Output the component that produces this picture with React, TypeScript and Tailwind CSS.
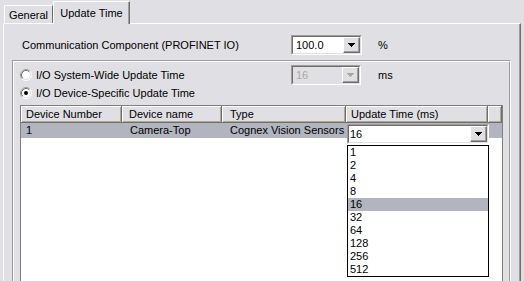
import type { ReactNode } from 'react'

const Arrow = ({ color = '#000000' }: { color?: string }) => (
  <svg width="7" height="4" viewBox="0 0 7 4" shapeRendering="crispEdges">
    <rect x="0" y="0" width="7" height="1" fill={color} />
    <rect x="1" y="1" width="5" height="1" fill={color} />
    <rect x="2" y="2" width="3" height="1" fill={color} />
    <rect x="3" y="3" width="1" height="1" fill={color} />
  </svg>
)

const Combo = ({
  value,
  width,
  pad,
  disabled = false,
}: {
  value: string
  width: string
  pad: string
  disabled?: boolean
}) => (
  <div
    className={`h-[20px] border border-t-[#9d9da1] border-l-[#9d9da1] border-r-white border-b-white ${width}`}
  >
    <div
      className={`flex h-full border border-t-[#716f64] border-l-[#716f64] border-r-[#e0dfe3] border-b-[#e0dfe3] ${
        disabled ? 'bg-[#e0dfe3] text-[#aca899]' : 'bg-white'
      }`}
    >
      <span className={`flex flex-1 items-center ${pad}`}>{value}</span>
      <div className="flex h-[16px] w-[17px] items-center justify-center border border-t-white border-l-white border-r-[#716f64] border-b-[#716f64] bg-[#e0dfe3] shadow-[inset_-1px_-1px_0_#9d9da1]">
        <Arrow color={disabled ? '#aca899' : '#000000'} />
      </div>
    </div>
  </div>
)

const Radio = ({ checked = false }: { checked?: boolean }) => (
  <svg width="12" height="12" viewBox="0 0 12 12">
    <circle cx="6" cy="6" r="5" fill="white" />
    <path d="M2.11 9.89A5.5 5.5 0 0 1 9.89 2.11" fill="none" stroke="#9d9da1" />
    <path d="M9.89 2.11A5.5 5.5 0 0 1 2.11 9.89" fill="none" stroke="#ffffff" />
    <path d="M2.82 9.18A4.5 4.5 0 0 1 9.18 2.82" fill="none" stroke="#716f64" />
    <path d="M9.18 2.82A4.5 4.5 0 0 1 2.82 9.18" fill="none" stroke="#e0dfe3" />
    {checked && <circle cx="6" cy="6" r="2" fill="black" />}
  </svg>
)

const HeaderCell = ({ width, pad, children }: { width: string; pad: string; children?: ReactNode }) => (
  <div
    className={`flex h-full items-center border-r border-b border-r-[#716f64] border-b-[#716f64] bg-[#e0dfe3] shadow-[inset_1px_1px_0_#ffffff,inset_-1px_-1px_0_#aca899] ${width} ${pad}`}
  >
    {children}
  </div>
)

const times = ['1', '2', '4', '8', '16', '32', '64', '128', '256', '512']

export default function App() {
  return (
    <div className="h-[281px] w-[524px] overflow-hidden bg-[#e0dfe3] font-['Liberation_Sans',Arial,sans-serif] text-[11px] leading-none text-black">
      {/* tabs */}
      <div className="relative z-10 flex h-[23px] items-end pl-[4px]">
        <div className="flex h-[18px] w-[49px] items-center justify-center rounded-tl-[2px] border-t border-l border-r border-t-white border-l-white border-r-[#716f64] pt-[2px]">
          General
        </div>
        <div className="-mb-px flex h-[23px] w-[77px] items-center justify-center rounded-tl-[2px] border-t border-l border-r border-t-white border-l-white border-r-[#716f64] bg-[#e0dfe3] shadow-[inset_-1px_0_0_#9d9da1]">
          Update Time
        </div>
      </div>

      {/* panel */}
      <div className="ml-[3px] h-[258px] w-[518px] border-t border-l border-r border-t-white border-l-white border-r-[#716f64] shadow-[inset_-1px_0_0_#9d9da1]">
        <div className="mt-[11px] flex h-[20px] items-center pl-[18px]">
          <span className="w-[269px]">Communication Component (PROFINET IO)</span>
          <Combo value="100.0" width="w-[71px]" pad="pl-[3px]" />
          <span className="ml-[16px]">%</span>
        </div>

        {/* group box */}
        <div className="mt-[5px] ml-[8px] w-[499px] border border-t-[#9d9da1] border-l-[#9d9da1] border-r-white border-b-white">
          <div className="h-[230px] border border-t-white border-l-white border-r-[#9d9da1] border-b-[#9d9da1]">
            <div className="mt-[3px] flex h-[20px] items-center pl-[6px]">
              <Radio />
              <span className="ml-[4px] w-[255px]">I/O System-Wide Update Time</span>
              <Combo value="16" width="w-[70px]" pad="pl-[3px]" disabled />
              <span className="ml-[17px]">ms</span>
            </div>
            <div className="flex h-[16px] items-center pl-[6px]">
              <Radio checked />
              <span className="ml-[4px]">I/O Device-Specific Update Time</span>
            </div>

            {/* list view */}
            <div className="relative mt-[4px] ml-[6px] h-[190px] w-[483px] border border-[#808080] bg-white">
              <div className="flex h-[17px]">
                <HeaderCell width="w-[101px]" pad="pl-[5px]">Device Number</HeaderCell>
                <HeaderCell width="w-[100px]" pad="pl-[7px]">Device name</HeaderCell>
                <HeaderCell width="w-[124px]" pad="pl-[8px]">Type</HeaderCell>
                <HeaderCell width="w-[142px]" pad="pl-[5px]">Update Time (ms)</HeaderCell>
                <HeaderCell width="flex-1" pad="pl-0" />
              </div>
              <div className="flex h-[15px] items-center bg-[#b2b4bf]">
                <span className="w-[101px] pl-[5px]">1</span>
                <span className="w-[100px] pl-[8px]">Camera-Top</span>
                <span className="w-[124px] pl-[8px]">Cognex Vision Sensors</span>
              </div>

              {/* in-place editor */}
              <div className="absolute top-[18px] left-[326px]">
                <Combo value="16" width="w-[142px]" pad="pl-[1px]" />
              </div>
              <div className="absolute top-[39px] left-[326px] w-[142px] border border-black bg-white">
                {times.map((t) => (
                  <div
                    key={t}
                    className={`flex h-[13px] items-center pl-[2px] ${t === '16' ? 'bg-[#b2b4bf]' : ''}`}
                  >
                    {t}
                  </div>
                ))}
              </div>
            </div>
          </div>
        </div>
      </div>
    </div>
  )
}
